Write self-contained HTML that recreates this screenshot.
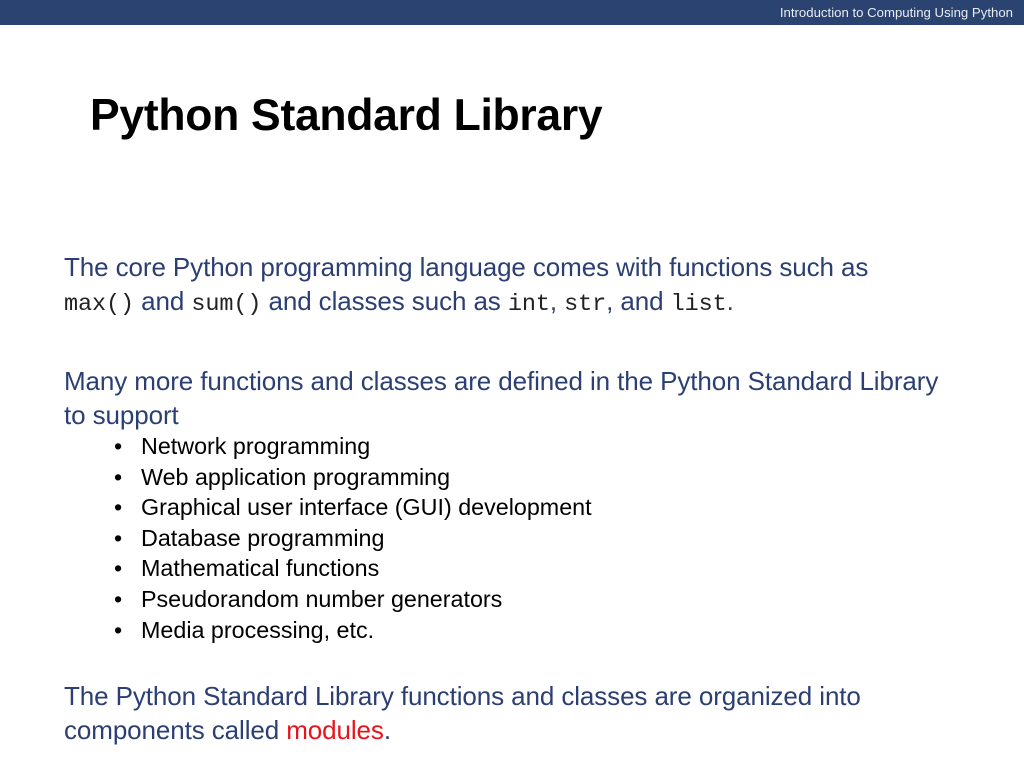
<!DOCTYPE html>
<html><head><meta charset="utf-8"><style>
body{margin:0;width:1024px;height:768px;background:#fff;position:relative;overflow:hidden;font-family:"Liberation Sans",sans-serif}
.bar{position:absolute;left:0;top:0;width:1024px;height:25px;background:#2b4371}
.hdr{position:absolute;right:11px;top:5px;color:#e8ecf4;font-size:13.2px}
.t{position:absolute;left:90px;top:91px;font-size:44.5px;font-weight:bold;color:#000;letter-spacing:-0.3px}
.p{position:absolute;left:64px;color:#2b3f73;font-size:26px;white-space:nowrap;letter-spacing:-0.1px;line-height:30px}
.m{font-family:"Liberation Mono",monospace;color:#222;font-size:23.5px}
.b{position:absolute;left:114px;color:#000;font-size:23.3px;white-space:nowrap;line-height:26px}
.b span{position:absolute;left:27px}
</style></head><body>
<div class="bar"></div><div class="hdr">Introduction to Computing Using Python</div>
<div class="t">Python Standard Library</div>
<div class="p" style="top:252px">The core Python programming language comes with functions such as</div>
<div class="p" style="top:286px"><span class="m">max()</span> and <span class="m">sum()</span> and classes such as <span class="m">int</span>, <span class="m">str</span>, and <span class="m">list</span>.</div>
<div class="p" style="top:366px">Many more functions and classes are defined in the Python Standard Library</div>
<div class="p" style="top:400px">to support</div>
<div class="b" style="top:433px">•<span>Network programming</span></div>
<div class="b" style="top:464px">•<span>Web application programming</span></div>
<div class="b" style="top:494px">•<span>Graphical user interface (GUI) development</span></div>
<div class="b" style="top:525px">•<span>Database programming</span></div>
<div class="b" style="top:555px">•<span>Mathematical functions</span></div>
<div class="b" style="top:586px">•<span>Pseudorandom number generators</span></div>
<div class="b" style="top:617px">•<span>Media processing, etc.</span></div>
<div class="p" style="top:681px">The Python Standard Library functions and classes are organized into</div>
<div class="p" style="top:715px">components called <span style="color:#e8141c">modules</span>.</div>
</body></html>
